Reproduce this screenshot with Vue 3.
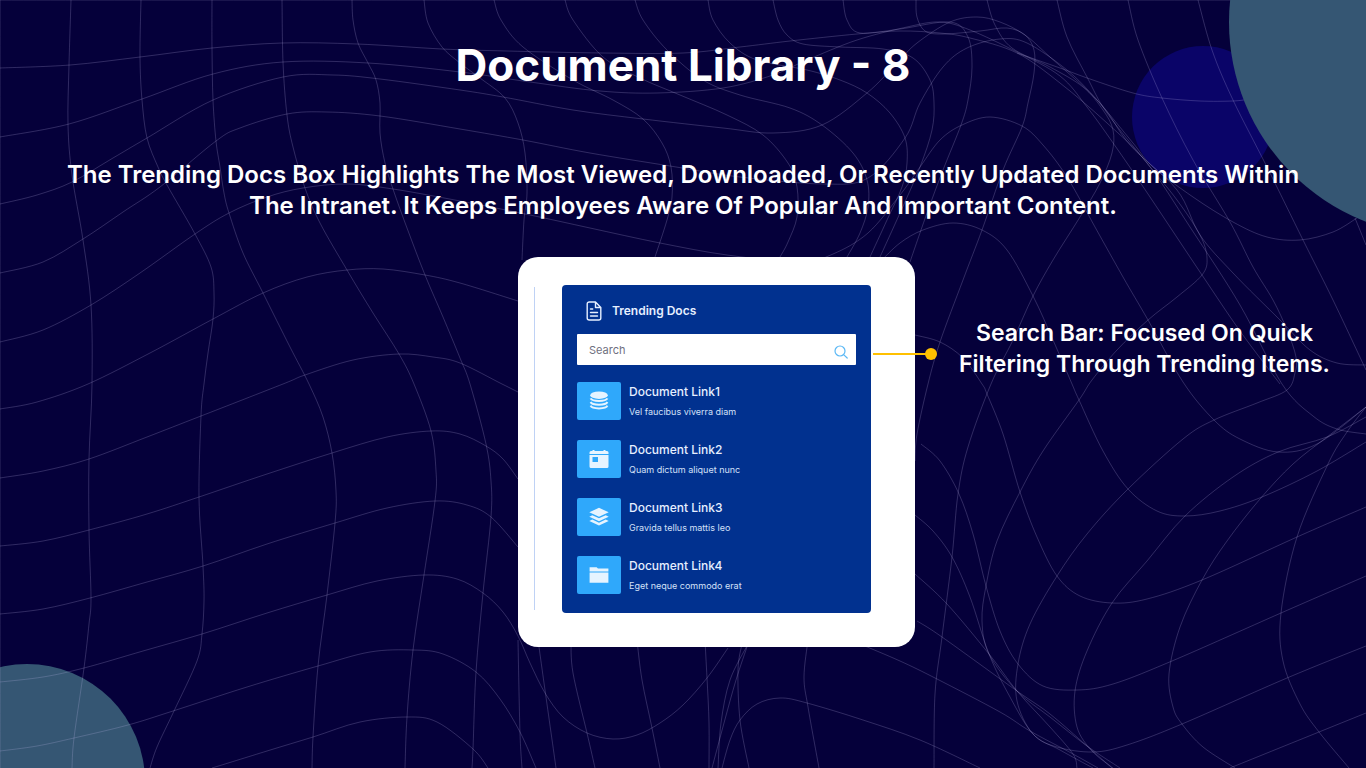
<script setup>
import { ref } from 'vue'

const query = ref('')

const docs = [
  { title: 'Document Link1', note: 'Vel faucibus viverra diam', icon: 'stack' },
  { title: 'Document Link2', note: 'Quam dictum aliquet nunc', icon: 'calendar' },
  { title: 'Document Link3', note: 'Gravida tellus mattis leo', icon: 'layers' },
  { title: 'Document Link4', note: 'Eget neque commodo erat', icon: 'folder' },
]

// Waypoints of the warped mesh behind the slide, one line per entry: x,y pairs.
const mesh = [
  '0,0 1366,0',
  '0,0 0,768',
  '71,0 69,65 68,125 72,175 83,240 91,305 92,384 89,459 89,530 91,598 89,624 84,668 74,738 72,768',
  '141,0 140,57 142,100 147,138 158,167 167,185 195,234 211,267 214,293 213,319 208,353 204,384 201,416 199,497 203,566 204,601 202,634 197,661 174,711 157,747 150,768',
  '212,0 212,48 213,100 216,141 220,167 224,193 229,213 243,253 263,293 290,347 309,384 323,417 332,453 336,491 335,523 327,595 318,666 313,737 312,768',
  '282,0 283,62 287,115 293,147 305,188 320,223 347,270 373,313 399,354 414,384 431,431 436,471 435,501 424,575 413,650 407,717 405,768',
  '352,0 353,20 358,43 368,63 376,80 380,103 380,133 385,163 394,192 407,228 425,275 443,317 460,358 470,384 486,444 491,481 491,517 483,593 476,672 473,749 472,768',
  '424,0 428,23 442,47 460,63 480,78 505,98 518,123 525,153 527,193 524,220 522,260',
  '494,0 501,20 523,47 573,80 613,100 643,119 662,143 671,167 672,197 667,220 655,257',
  '565,0 573,20 603,57 640,78 680,95 727,115 763,135 788,163 797,187 797,217 788,242 780,257',
  '635,0 643,20 667,50 703,80 740,95 790,108 822,125 853,153 867,180 868,207 860,233 847,257',
  '708,0 713,20 730,43 757,60 807,70 840,80 867,93 890,113 905,138 907,163 902,187 887,220 870,257',
  '773,0 778,20 787,35 803,44 840,47 883,49 913,58 930,80 934,103 932,130 920,167 900,213 880,257',
  '843,0 847,20 860,33 900,29 950,22 968,37 972,67 968,100 961,125 943,170 927,213 910,262',
  '916,0 917,17 925,31 943,34 980,31 1007,28 1025,35 1034,50 1034,73 1028,103 1022,127 1003,170 982,230 963,280 940,342 928,384 917,434 915,461',
  '987,0 995,25 1012,48 1050,67 1083,87 1103,110 1113,130 1112,153 1100,183 1080,217 1053,260 1033,296 1013,340 991,384 968,447 958,494 952,557 942,637 935,694 934,768',
  '1057,0 1067,37 1087,77 1107,113 1147,163 1177,200 1200,235 1207,258 1202,275 1177,297 1148,320 1117,350 1092,380 1079,400 1043,451 1020,492 997,541 986,586 982,621 989,654 1017,691 1050,717 1087,746 1120,768',
  '1128,0 1138,40 1162,98 1193,160 1230,222 1253,267 1273,300 1287,330 1296,357 1295,373 1287,390 1257,403 1214,420 1183,439 1128,489 1087,534 1057,576 1030,624 1018,664 1017,701 1033,734 1060,750 1093,768',
  '1198,0 1212,50 1233,100 1267,167 1303,240 1333,300 1366,370',
  '1355,218 1366,245',
  '0,68 70,65 140,57 212,48 282,43 357,44 442,49 507,51 603,53 683,53 740,47 790,41 857,34 900,31 940,33 970,38 1017,53 1060,83 1107,123 1147,163 1190,227 1240,305 1282,384 1313,416 1337,429 1366,434',
  '0,137 69,124 142,99 213,74 283,62 368,63 460,72 530,82 600,91 657,93 723,88 773,75 807,60 857,40 907,27 940,22 970,30 1017,52 1060,76 1087,107 1118,150 1150,197 1202,275 1240,331 1280,384',
  '0,204 37,195 72,182 113,158 147,138 213,100 283,77 333,75 380,79 460,90 503,97 573,110 643,119 723,128 773,133 822,125 867,93 897,63 917,43 950,22 977,17 1000,22 1025,35 1050,57 1100,103 1130,145 1177,190 1200,235 1233,273 1280,320 1310,350 1337,363 1366,365',
  '0,273 43,262 83,239 123,212 160,187 216,141 240,128 287,114 327,112 380,116 460,129 523,140 590,153 670,166 740,177 823,184 868,178 905,138 920,103 943,67 967,48 1000,39 1027,43 1067,70 1097,100 1133,143 1153,167 1193,197 1233,222 1267,237 1300,240 1333,232 1357,218',
  '0,342 43,330 91,305 140,273 195,234 229,213 267,197 303,188 347,184 393,189 460,201 530,215 590,228 660,243 727,255 800,262 833,254 868,233 900,195 920,167 940,140 962,125 990,117 1022,126 1043,145 1067,177 1095,227 1123,277 1148,320 1183,382 1214,420 1240,439 1278,452 1317,444 1366,407',
  '0,409 37,402 88,384 150,353 213,319 263,293 307,277 347,270 383,269 425,275 460,283 518,301',
  '880,262 900,243 923,230 953,223 982,230 1007,250 1033,296 1053,340 1072,384 1079,400 1103,451 1128,489 1157,511 1185,516 1220,511 1262,497 1317,471 1366,442',
  '0,478 43,471 89,459 147,437 201,416 283,384 305,375 353,360 399,354 433,357 460,363 502,384 518,392',
  '915,335 940,342 963,358 982,384 987,394 1003,434 1020,492 1037,537 1057,576 1080,596 1112,603 1147,599 1202,580 1297,537 1366,507',
  '0,546 43,541 89,530 147,514 199,497 267,474 332,453 387,437 431,431 460,434 486,446 503,459 518,479',
  '921,444 940,461 959,494 973,534 986,586 1000,631 1018,664 1043,686 1077,690 1113,684 1172,661 1281,613 1366,576',
  '0,614 43,609 90,598 147,582 203,566 267,544 335,523 387,508 435,501 467,505 491,517 518,547',
  '915,515 933,531 952,557 970,597 989,654 1010,697 1033,734 1057,747 1093,752 1127,745 1182,724 1287,678 1366,646',
  '0,682 43,677 84,668 143,651 202,634 267,613 327,595 377,581 424,575 457,579 483,593 503,612 518,636 530,663 545,693 563,717 587,733 613,739 637,735 660,723 683,705 707,678 728,648',
  '0,751 37,746 74,738 128,725 173,711 247,687 318,666 370,652 413,650 443,654 476,672 500,699 520,732 536,768',
  '212,768 267,751 313,737 360,722 407,717 437,722 473,749 488,768',
  '518,640 520,733 522,768',
  '538,640 545,690 556,768',
  '571,640 573,673 587,733 595,768',
  '637,640 642,680 652,728 660,768',
  '705,640 707,678 709,723 709,768',
  '748,644 730,680 721,723 718,768',
  '748,644 736,680 724,723 712,768',
  '742,644 738,670 740,720 749,768',
  '722,768 730,740 740,720 757,704 780,698 807,703 863,720 920,740 980,768',
  '808,640 804,677 808,707 819,768',
  '860,644 900,661 937,679 1000,712 1030,731 1073,754 1098,768',
  '917,621 942,637 1017,691 1050,714 1087,746 1112,768',
  '915,574 947,604 989,654 1017,691 1050,727 1073,754 1077,768',
  '1366,417 1327,437 1278,452 1233,477 1185,516 1147,561 1112,603 1087,651 1075,691 1077,727 1092,751 1113,768',
  '1366,407 1327,437 1293,464 1260,499 1227,541 1202,580 1180,627 1169,674 1173,707 1182,724 1203,747 1235,768',
  '1366,407 1347,432 1328,464 1297,537 1281,613 1283,661 1300,704 1319,732 1349,768',
  '1230,768 1319,732 1366,713',
  '1017,53 1060,68 1090,79 1133,93 1162,98 1200,101 1233,101 1250,99',
]

// Smooths the waypoints with a Catmull-Rom spline, written as cubic Béziers.
function smooth(line) {
  const p = line.split(' ').map((pair) => pair.split(',').map(Number))
  let d = `M${p[0][0]} ${p[0][1]}`
  for (let i = 0; i < p.length - 1; i++) {
    const a = p[i - 1] || p[i]
    const b = p[i]
    const c = p[i + 1]
    const e = p[i + 2] || c
    const k = [
      b[0] + (c[0] - a[0]) / 6, b[1] + (c[1] - a[1]) / 6,
      c[0] - (e[0] - b[0]) / 6, c[1] - (e[1] - b[1]) / 6,
    ].map((n) => n.toFixed(1))
    d += `C${k[0]} ${k[1]} ${k[2]} ${k[3]} ${c[0]} ${c[1]}`
  }
  return d
}
const paths = mesh.map(smooth)
</script>

<template>
  <main class="slide">
    <svg class="backdrop" viewBox="0 0 1366 768" preserveAspectRatio="xMidYMid slice" aria-hidden="true">
      <circle cx="1203" cy="117" r="71" fill="#0a0468" />
      <circle cx="27" cy="782" r="118" fill="#355673" />
      <g fill="none" stroke="#c8c0f0" stroke-opacity="0.22" stroke-width="1">
        <path v-for="(d, i) in paths" :key="i" :d="d" />
      </g>
      <circle cx="1443" cy="22" r="214" fill="#355673" />
    </svg>

    <header class="intro">
      <h1>Document Library - 8</h1>
      <p>
        The Trending Docs Box Highlights The Most Viewed, Downloaded, Or Recently Updated Documents Within
        The Intranet. It Keeps Employees Aware Of Popular And Important Content.
      </p>
    </header>

    <div class="stage">
      <section class="card">
        <div class="panel">
          <h2>
            <svg class="doc" viewBox="0 0 16 20" aria-hidden="true">
              <path d="M9.5 1H3.2A2 2 0 0 0 1.2 3v14a2 2 0 0 0 2 2h9.6a2 2 0 0 0 2-2V6.5zM9.5 1v5.500h5.300M4.500 8h2.200M4.500 11.500h7M4.500 15h7" />
            </svg>
            Trending Docs
          </h2>
          <form class="search" @submit.prevent>
            <input v-model="query" type="text" placeholder="Search" aria-label="Search" />
            <button type="submit" aria-label="Search documents">
              <svg viewBox="0 0 14 14" aria-hidden="true">
                <circle cx="6" cy="6" r="5" /><path d="M9.6 9.6l3.6 3.4" />
              </svg>
            </button>
          </form>
          <ul>
            <li v-for="doc in docs" :key="doc.title">
              <a href="#">
                <span class="tile">
                  <svg viewBox="0 0 20 20" aria-hidden="true">
                    <template v-if="doc.icon === 'stack'">
                      <ellipse cx="10" cy="4.2" rx="8.8" ry="3.7" />
                      <path class="band" d="M1.6 7.4c1.6 3.4 15.2 3.4 16.8 0M1.6 11c1.6 3.5 15.2 3.5 16.8 0M1.6 14.7c1.6 3.6 15.2 3.6 16.8 0" />
                    </template>
                    <template v-else-if="doc.icon === 'calendar'">
                      <path d="M.5 5V3.500A1.500 1.500 0 0 1 2 2h1.500V1h2v1h9V1h2v1H18a1.500 1.500 0 0 1 1.500 1.500V5z" />
                      <path fill-rule="evenodd" d="M.5 6h19v11.500a1.500 1.500 0 0 1-1.500 1.500H2A1.500 1.500 0 0 1 .5 17.500zM3.500 8v5h5.500V8z" />
                    </template>
                    <template v-else-if="doc.icon === 'layers'">
                      <path d="M10 .8L19.700 5.300 10 9.800 .3 5.300zM3.300 8.200L10 11.300l6.700-3.100 3 1.500L10 14.200 .3 9.700zM3.300 12.600L10 15.700l6.700-3.100 3 1.500L10 18.600 .3 14.100z" />
                    </template>
                    <template v-else>
                      <path d="M.6 6.500V2.300h7l1.400 1.200h10.400v3zM.6 7.600h18.800v10.200H.6z" />
                    </template>
                  </svg>
                </span>
                <span class="text">
                  <strong>{{ doc.title }}</strong>
                  <small>{{ doc.note }}</small>
                </span>
              </a>
            </li>
          </ul>
        </div>
        <span class="pointer" aria-hidden="true"></span>
      </section>
      <p class="callout">Search Bar: Focused On Quick Filtering Through Trending Items.</p>
    </div>
  </main>
</template>

<style>
body {
  margin: 0;
  background: #05003a;
}
</style>

<style scoped>
* {
  box-sizing: border-box;
}
.slide {
  position: relative;
  min-height: 100vh;
  overflow: hidden;
  padding-bottom: 24px;
  background: #05003a;
  color: #fff;
  font-family: Inter, "Liberation Sans", sans-serif;
}
.backdrop {
  position: absolute;
  inset: 0;
  width: 100%;
  height: 100%;
}
.intro {
  position: relative;
  padding-top: 39px;
  text-align: center;
}
h1 {
  margin: 0;
  font-size: 44px;
  line-height: 52px;
  font-weight: 700;
}
.intro p {
  max-width: 1260px;
  margin: 68px auto 0;
  font-size: 24px;
  line-height: 31px;
  font-weight: 600;
}
.stage {
  position: relative;
  display: grid;
  grid-template-columns: 518fr 397px 451fr;
  align-items: start;
  margin-top: 36px;
}
.card {
  position: relative;
  grid-column: 2;
  padding: 28px 44px 34px;
  border-radius: 20px;
  background: #fff;
}
.card::before {
  content: "";
  position: absolute;
  left: 16px;
  top: 30px;
  bottom: 37px;
  width: 1px;
  background: #bfd2f5;
}
.pointer {
  position: absolute;
  left: 355px;
  top: 96px;
  width: 58px;
  height: 2px;
  background: #ffc000;
}
.pointer::after {
  content: "";
  position: absolute;
  right: -6px;
  top: -5px;
  width: 12px;
  height: 12px;
  border-radius: 50%;
  background: #ffc000;
}
.panel {
  padding: 16px 15px 19px;
  border-radius: 4px;
  background: #01318f;
}
h2 {
  display: flex;
  align-items: center;
  gap: 10px;
  margin: 0 0 13px;
  padding-left: 9px;
  font-size: 12px;
  line-height: 20px;
  font-weight: 600;
  color: #e6efff;
}
.doc {
  width: 16px;
  height: 20px;
  fill: none;
  stroke: #e6efff;
  stroke-width: 1.4;
  stroke-linejoin: round;
  stroke-linecap: round;
}
.search {
  display: flex;
  height: 31px;
  border-radius: 1px;
  background: #fff;
}
.search input {
  flex: 1;
  min-width: 0;
  padding: 0 12px;
  border: 0;
  outline: 0;
  background: none;
  color: #333;
  font: 400 11px/16px Inter, "Liberation Sans", sans-serif;
}
.search input::placeholder {
  color: #6f6f80;
  opacity: 1;
}
.search button {
  display: flex;
  align-items: center;
  padding: 5px 8px 0;
  border: 0;
  background: none;
}
.search svg {
  width: 14px;
  height: 14px;
  fill: none;
  stroke: #5bb8f5;
  stroke-width: 1.2;
  stroke-linecap: round;
}
ul {
  display: grid;
  gap: 20px;
  margin: 17px 0 0;
  padding: 0;
  list-style: none;
}
li a {
  display: flex;
  gap: 8px;
  color: #e6efff;
  text-decoration: none;
}
.tile {
  display: grid;
  place-items: center;
  width: 44px;
  height: 38px;
  border-radius: 2px;
  background: #2fa8fb;
}
.tile svg {
  width: 20px;
  height: 20px;
  fill: #e6f4ff;
}
.tile .band {
  fill: none;
  stroke: #e6f4ff;
  stroke-width: 2;
}
.text {
  display: grid;
  align-content: start;
  gap: 3px;
}
strong {
  font-size: 12px;
  line-height: 19px;
  font-weight: 500;
}
small {
  font-size: 9px;
  line-height: 16px;
  color: #d3e0f8;
}
.callout {
  margin: 61px 27px 0 35px;
  text-align: center;
  font-size: 23px;
  line-height: 31px;
  font-weight: 600;
}
</style>
